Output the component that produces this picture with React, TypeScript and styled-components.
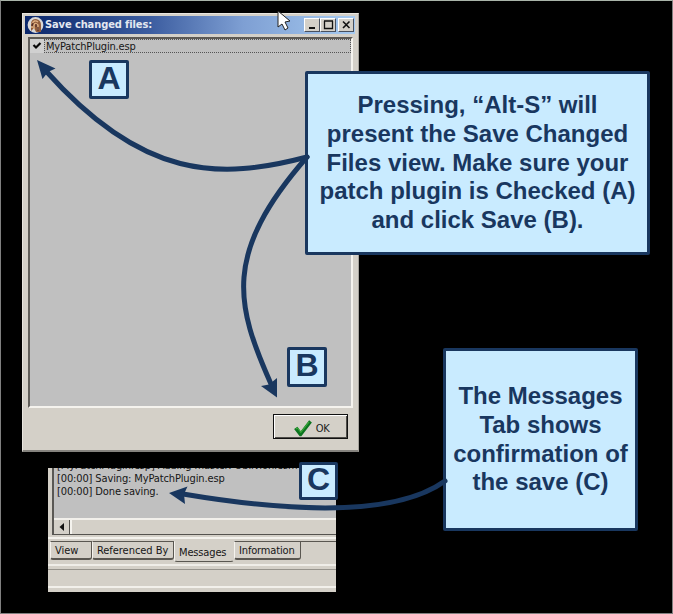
import React from "react";
import styled, { createGlobalStyle } from "styled-components";

const NAVY = "#19375f";
const PALE = "#c9ebff";
const FACE = "#d4d0c8";
const PANE = "#c0c0c0";

const GlobalStyle = createGlobalStyle`
  * { box-sizing: border-box; }
  body { margin: 0; background: #000; }
`;

const Slide = styled.main`
  position: relative;
  width: 673px;
  height: 614px;
  overflow: hidden;
  display: flex;
  flex-direction: column;
  align-items: flex-start;
  gap: 16px;
  padding: 12px 0 0 21px;
  background: #000;
  border: 1px solid #808080;
  border-top-color: #a9b4a9;
  font: 11px/13px "DejaVu Sans Condensed", "DejaVu Sans", sans-serif;
  color: #161616;
`;

const Label = styled.span<{ $spacing?: number }>`
  white-space: nowrap;
  letter-spacing: ${(p) => p.$spacing ?? 0}px;
`;

const Dialog = styled.section`
  display: flex;
  flex-direction: column;
  width: 337px;
  height: 439px;
  padding: 2px 3px 0 2px;
  background: ${FACE};
  border: 1px solid #e8e5df;
  border-right-color: #a5a29c;
  border-bottom: 2px solid #85837e;
`;

const TitleBar = styled.header`
  display: flex;
  align-items: center;
  height: 18px;
  padding: 0 1px 0 2px;
  background: linear-gradient(90deg, #0b276b 0%, #3c5da0 38%, #7e9fd3 66%, #a6caf0 100%);
  color: #e4e8f0;
`;

const Title = styled.h1<{ $spacing: number }>`
  flex: 1;
  margin: 0 0 0 1px;
  font: bold 11px/16px "DejaVu Sans Condensed", "DejaVu Sans", sans-serif;
  letter-spacing: ${(p) => p.$spacing}px;
  white-space: nowrap;
`;

const WindowButtons = styled.div`
  display: flex;
`;

const WindowButton = styled.button<{ $gap?: boolean }>`
  display: flex;
  width: 16px;
  height: 14px;
  padding: 0;
  margin-left: ${(p) => (p.$gap ? 2 : 0)}px;
  background: ${FACE};
  border: 1px solid;
  border-color: #fff #48505e #48505e #fff;
`;

const FileList = styled.div`
  height: 371px;
  margin: 3px 2px 0 3px;
  background: ${PANE};
  border: 2px solid;
  border-color: #5c5954 #f5f3ee #f5f3ee #605e5a;
`;

const FileRow = styled.div`
  display: flex;
  height: 14px;
  align-items: stretch;
`;

const CheckBox = styled.span`
  display: flex;
  width: 14px;
  height: 14px;
  padding: 1px;
  background: #d0d0d0;
`;

const FileName = styled.div`
  flex: 1;
  display: flex;
  align-items: center;
  padding: 2px 0 0 1px;
  border: 1px dotted #555;
  line-height: 12px;
`;

const Footer = styled.footer`
  display: flex;
  justify-content: flex-end;
  padding: 6px 7px 0 0;
`;

const OkButton = styled.button`
  display: flex;
  align-items: center;
  justify-content: center;
  gap: 3px;
  width: 75px;
  height: 25px;
  padding: 3px 0 0 1px;
  font: inherit;
  color: #1b1b1b;
  background: ${FACE};
  border: 1px solid #111;
  box-shadow: inset 1px 1px #fff, inset -1px -1px #4e4c48;
`;

const MessagePanel = styled.section`
  display: flex;
  flex-direction: column;
  width: 288px;
  height: 124px;
  margin-left: 26px;
  background: ${FACE};
  overflow: hidden;
`;

const LogView = styled.div`
  display: flex;
  flex-direction: column;
  height: 67px;
  margin-left: 4px;
  border-left: 2px solid #5a5854;
  border-bottom: 1px solid #55534f;
  background: ${PANE};
`;

const LogLines = styled.div`
  display: flex;
  flex-direction: column;
  height: 49px;
  padding-left: 3px;
  overflow: hidden;
`;

const LogLine = styled(Label)<{ $first?: boolean }>`
  flex: none;
  height: 13px;
  margin-top: ${(p) => (p.$first ? -9 : 0)}px;
`;

const ScrollBar = styled.div`
  display: flex;
  height: 16px;
  margin-top: auto;
  background: ${FACE};
  border-top: 2px solid #f2f0eb;
`;

const ScrollArrow = styled.span`
  display: flex;
  align-items: center;
  justify-content: center;
  width: 16px;
  border-right: 1px solid #54524e;
`;

const ScrollThumb = styled.span`
  flex: 1;
  border-left: 2px solid #f5f3ee;
`;

const TabStrip = styled.nav`
  display: flex;
  align-items: flex-start;
  height: 29px;
  margin-top: 2px;
  padding: 2px 0 0 2px;
  border-top: 2px solid #f4f2ed;
  border-bottom: 2px solid #efede8;
`;

const Tab = styled.div<{ $width: number; $active?: boolean; $pad: number }>`
  width: ${(p) => p.$width}px;
  height: ${(p) => (p.$active ? 21 : 19)}px;
  padding: ${(p) => (p.$active ? 4 : 2)}px 0 0 ${(p) => p.$pad}px;
  border: 1px solid #5a5751;
  border-left-color: #f5f3ee;
  border-top-color: ${(p) => (p.$active ? FACE : "#5a5751")};
  border-right-color: ${(p) => (p.$active ? FACE : "#5a5751")};
  border-bottom-width: ${(p) => (p.$active ? 1 : 2)}px;
  border-radius: 0 0 3px 3px;
`;

const TabRest = styled.div`
  flex: 1;
  border-top: 1px solid #5a5751;
`;

const StatusBar = styled.div`
  height: 19px;
  margin-top: 3px;
  border-top: 1px solid #96938c;
  border-bottom: 2px solid #f2f0eb;
`;

const Note = styled.aside<{ $x: number; $y: number; $w: number; $h: number }>`
  position: absolute;
  left: ${(p) => p.$x - 1}px;
  top: ${(p) => p.$y - 1}px;
  width: ${(p) => p.$w}px;
  height: ${(p) => p.$h}px;
  display: flex;
  flex-direction: column;
  align-items: center;
  justify-content: center;
  background: ${PALE};
  border: 3px solid ${NAVY};
  border-radius: 2px;
  color: ${NAVY};
  font: bold 24px/28.8px "Liberation Sans", Arial, sans-serif;
`;

const Marker = styled(Note)`
  padding-bottom: 4px;
  font-size: 32px;
  line-height: 32px;
`;

const Overlay = styled.svg`
  position: absolute;
  left: -1px;
  top: -1px;
  pointer-events: none;
`;

const AppIcon = () => (
  <svg width="17" height="18" viewBox="0 0 17 18">
    <circle cx="8.5" cy="9" r="7.9" fill="#d9d8d7" />
    <path d="M4 15V8Q4 3 9 3Q14 4 14 9V16H9L7 12Z" fill="#925d3c" />
    <path d="M5 8Q7 3 11 6M7 13V9Q8 6 11 9V14M4 11H6" fill="none" stroke="#e0b184" strokeWidth="1.4" />
    <path d="M9 8V11M11 11V15M6 7L5 10" stroke="#502c28" strokeWidth="1.2" />
  </svg>
);

const noteOne = ["Pressing, “Alt-S” will", "present the Save Changed", "Files view. Make sure your", "patch plugin is Checked (A)", "and click Save (B)."];
const noteTwo = ["The Messages", "Tab shows", "confirmation of", "the save (C)"];

export default function App() {
  return (
    <>
      <GlobalStyle />
      <Slide>
        <Dialog>
          <TitleBar>
            <AppIcon />
            <Title $spacing={-0.1}>Save changed files:</Title>
            <WindowButtons>
              <WindowButton aria-label="Minimize">
                <svg width="14" height="12"><path d="M4 9H10" stroke="#111" strokeWidth="2" /></svg>
              </WindowButton>
              <WindowButton aria-label="Maximize">
                <svg width="14" height="12"><path d="M3.5 2V9.5H11.5V2M3 2H12" fill="none" stroke="#111" strokeWidth="1.3" /></svg>
              </WindowButton>
              <WindowButton aria-label="Close" $gap>
                <svg width="14" height="12"><path d="M4 2.5L10.5 9M10.5 2.5L4 9" stroke="#111" strokeWidth="1.6" /></svg>
              </WindowButton>
            </WindowButtons>
          </TitleBar>
          <FileList>
            <FileRow>
              <CheckBox>
                <svg width="12" height="12"><path d="M2.5 5L5 7.5L9.5 3" fill="none" stroke="#080808" strokeWidth="2.2" /></svg>
              </CheckBox>
              <FileName><Label $spacing={-0.17}>MyPatchPlugin.esp</Label></FileName>
            </FileRow>
          </FileList>
          <Footer>
            <OkButton>
              <svg width="20" height="19" viewBox="0 0 18 17">
                <path d="M1 9L4 7L7 11L14.5 1L17 3L7.5 15.5H6Z" fill="#0c7420" />
                <path d="M2.5 9L4 8L7 12L14.5 2.5" fill="none" stroke="#3aa83a" strokeWidth="1" />
              </svg>
              <Label $spacing={-0.3}>OK</Label>
            </OkButton>
          </Footer>
        </Dialog>

        <MessagePanel>
          <LogView>
            <LogLines>
              <LogLine $first $spacing={-0.13}>[MyPatchPlugin.esp] Adding master: Oblivion.esm</LogLine>
              <LogLine $spacing={-0.13}>[00:00] Saving: MyPatchPlugin.esp</LogLine>
              <LogLine $spacing={-0.13}>[00:00] Done saving.</LogLine>
            </LogLines>
            <ScrollBar>
              <ScrollArrow>
                <svg width="6" height="8"><path d="M5 0V8L0.5 4Z" fill="#111" /></svg>
              </ScrollArrow>
              <ScrollThumb />
            </ScrollBar>
          </LogView>
          <TabStrip>
            <Tab $width={42} $pad={4}><Label>View</Label></Tab>
            <Tab $width={82} $pad={4}><Label $spacing={-0.05}>Referenced By</Label></Tab>
            <Tab $width={60} $pad={4} $active><Label $spacing={-0.15}>Messages</Label></Tab>
            <Tab $width={67} $pad={4}><Label $spacing={-0.15}>Information</Label></Tab>
            <TabRest />
          </TabStrip>
          <StatusBar />
        </MessagePanel>

        <Note $x={305} $y={71} $w={345} $h={184}>
          {noteOne.map((line) => <Label key={line}>{line}</Label>)}
        </Note>
        <Note $x={443} $y={348} $w={195} $h={183}>
          {noteTwo.map((line) => <Label key={line}>{line}</Label>)}
        </Note>
        <Marker $x={89} $y={60} $w={40} $h={39}>A</Marker>
        <Marker $x={287} $y={347} $w={40} $h={40}>B</Marker>
        <Marker $x={299} $y={462} $w={39} $h={38}>C</Marker>

        <Overlay width="673" height="614" viewBox="0 0 673 614">
          <g fill="none" stroke={NAVY} strokeWidth="5" strokeLinecap="round">
            <path d="M307 157C220 180 143 180 46 71" />
            <path d="M307 157C222 254 236 305 271 384" />
            <path d="M445 481C395 517 290 512 183 494" />
          </g>
          <g fill={NAVY}>
            <path d="M37 60L55.5 68.5L48 72L42.5 79Z" />
            <path d="M277 397.5L261 386L269 384.5L277 378Z" />
            <path d="M169 493L187.5 486.5L184 494L185 504Z" />
          </g>
          <path d="M278 11V27L282 24L285 30L288 28L285 22L290 21Z" fill="#fff" stroke="#222" strokeWidth="1" />
        </Overlay>
      </Slide>
    </>
  );
}
